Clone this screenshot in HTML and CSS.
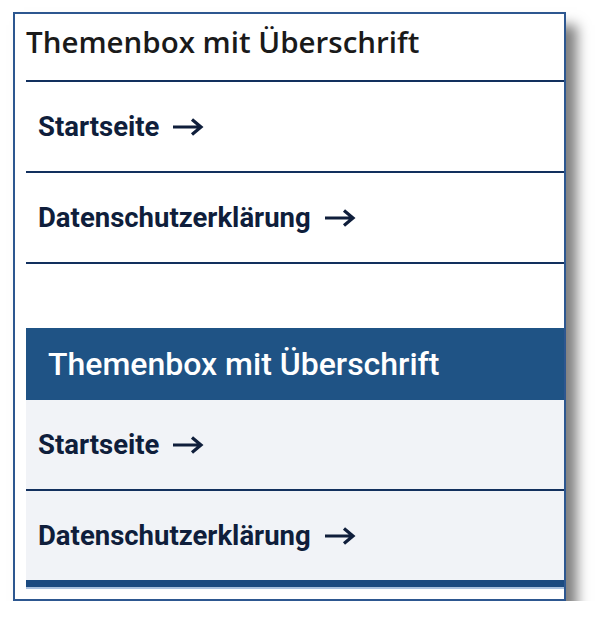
FILE: index.html
```html
<!DOCTYPE html>
<html lang="de">
<head>
  <meta charset="UTF-8">
  <meta name="viewport" content="width=device-width, initial-scale=1.0">
  <title>Themenbox</title>
  <link rel="stylesheet" href="styles.css">
</head>
<body>
  <div class="frame">
    <div class="topic-box">
      <h2 class="topic-box_title">Themenbox mit Überschrift</h2>
      <ul class="topic-list">
        <li class="topic-item">
          <a class="topic-link" href="#">Startseite
            <svg class="topic-arrow" viewBox="0 0 32 18" width="32" height="18"><path d="M1 9H29M20 1.5L29 9L20 16.5" /></svg>
          </a>
        </li>
        <li class="topic-item">
          <a class="topic-link" href="#">Datenschutzerklärung
            <svg class="topic-arrow" viewBox="0 0 32 18" width="32" height="18"><path d="M1 9H29M20 1.5L29 9L20 16.5" /></svg>
          </a>
        </li>
      </ul>
    </div>

    <div class="topic-box topic-box_filled">
      <h2 class="topic-box_title">Themenbox mit Überschrift</h2>
      <ul class="topic-list">
        <li class="topic-item">
          <a class="topic-link" href="#">Startseite
            <svg class="topic-arrow" viewBox="0 0 32 18" width="32" height="18"><path d="M1 9H29M20 1.5L29 9L20 16.5" /></svg>
          </a>
        </li>
        <li class="topic-item">
          <a class="topic-link" href="#">Datenschutzerklärung
            <svg class="topic-arrow" viewBox="0 0 32 18" width="32" height="18"><path d="M1 9H29M20 1.5L29 9L20 16.5" /></svg>
          </a>
        </li>
      </ul>
    </div>
  </div>
</body>
</html>
```

FILE: styles.css
```css
* {
  margin: 0;
  padding: 0;
  box-sizing: border-box;
}

body {
  background-color: #fff;
  font-family: Roboto, "Liberation Sans", sans-serif;
}

.frame {
  width: 553px;
  margin: 12px 0 0 13px;
  padding: 0 0 12px 11px;
  border: 2px solid #2d5790;
  background-color: #fff;
  box-shadow: 11px 13px 12px rgba(0,0,0,.5);
}

.topic-box {
  margin-bottom: 64px;
}

.topic-box_title {
  height: 68px;
  padding-top: 10px;
  border-bottom: 2px solid #12305e;
  font-family: "Open Sans", sans-serif;
  font-size: 29.5px;
  line-height: 36px;
  font-weight: 600;
  color: #1a1a1a;
}

.topic-list {
  list-style-type: none;
}

.topic-item {
  border-bottom: 2px solid #12305e;
}

.topic-link {
  display: flex;
  align-items: center;
  height: 89px;
  padding-left: 12px;
  font-size: 27.5px;
  font-weight: 700;
  color: #0f1e3b;
  text-decoration: none;
}

.topic-arrow {
  margin-left: 13px;
  fill: none;
  stroke: #0f1e3b;
  stroke-width: 3.2;
}

/* zweite Variante: blaue Kopfzeile, graue Zeilen */
.topic-box_filled {
  margin-bottom: 0;
  background-color: #f1f3f7;
  border-bottom: 7px solid #1b4a80;
  box-shadow: 0 2px 0 #a9c0de;
}

.topic-box_filled .topic-box_title {
  display: flex;
  align-items: center;
  height: 72px;
  padding: 0 0 0 22px;
  border-bottom: none;
  background-color: #1f5385;
  font-family: Roboto, sans-serif;
  font-size: 32px;
  font-weight: 500;
  color: #fff;
}

.topic-box_filled .topic-item:last-child {
  border-bottom: none;
}
```
